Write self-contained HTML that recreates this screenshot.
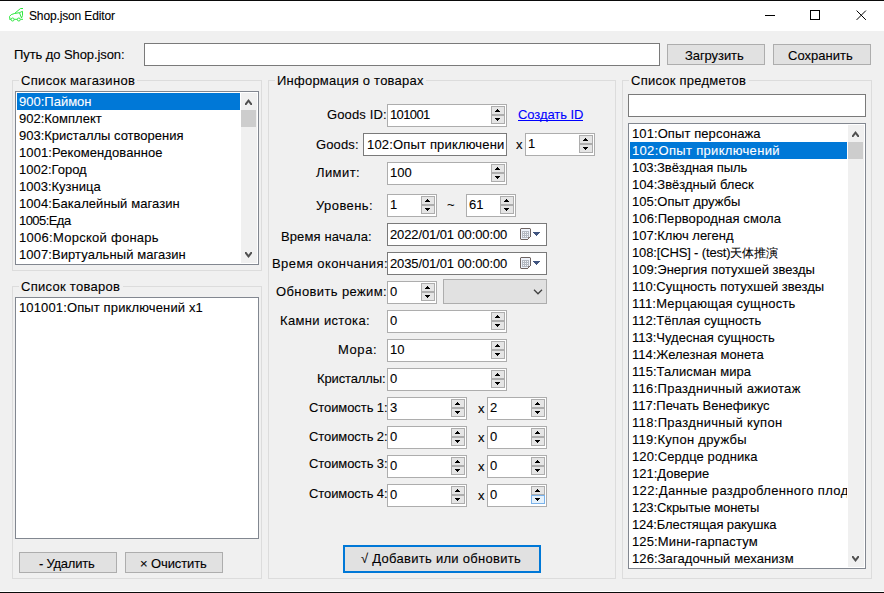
<!DOCTYPE html>
<html><head><meta charset="utf-8">
<style>
*{box-sizing:border-box;margin:0;padding:0}
html,body{width:884px;height:593px;overflow:hidden;background:#f0f0f0}
body{position:relative;font-family:"Liberation Sans",sans-serif;font-size:13px;color:#000;-webkit-text-stroke:0.1px currentColor}
.a{position:absolute}
.t{position:absolute;white-space:nowrap;line-height:15px;height:15px}
.grp{position:absolute;border:1px solid #dcdcdc}
.gbg{position:absolute;background:#f0f0f0;height:3px}
.tb{position:absolute;background:#fff;border:1px solid #7a7a7a;overflow:hidden}
.num{position:absolute;background:#fff;border:1px solid #adadad;overflow:hidden}
.spin{position:absolute;top:1px;right:1px;width:14px;height:18px}
.sb{position:absolute;left:0;width:14px;height:9px;background:#e5e5e5;border:1px solid #adadad}
.sb svg{position:absolute;left:3px;top:2px}
.btn{position:absolute;background:#e1e1e1;border:1px solid #adadad}
.lb{position:absolute;background:#fff;border:1px solid #828790;overflow:hidden}
.it{position:absolute;left:1px;height:17px;line-height:17px;white-space:nowrap;padding-left:2px}
.sel{background:#0078d7;color:#fff}
.scr{position:absolute;background:#f0f0f0;width:16px}
.thumb{position:absolute;left:0;width:15px;height:17px;background:#cdcdcd}
.dtp{position:absolute;background:#fff;border:1px solid #7a7a7a}
</style></head><body>
<div class="a" style="left:0;top:0;width:884px;height:1px;background:#0a0a0a"></div>
<div class="a" style="left:0;top:1px;width:884px;height:30px;background:#fff"></div>
<div class="a" style="left:0;top:592px;width:884px;height:1px;background:#0a0a0a"></div>
<div class="a" style="left:0;top:591px;width:884px;height:1px;background:#ffffff"></div>
<svg class="a" style="left:0;top:0" width="30" height="30" viewBox="0 0 30 30">
<g fill="none" stroke="#2ee83e" stroke-width="1" stroke-linejoin="round">
<path d="M14.5 13.5 L20.5 8.5 L23 8.5"/>
<path d="M10 19.5 L9.5 16.5 Q10.5 14.2 14.5 13.5 L19.5 12.7"/>
<path d="M19.5 12.7 L22.5 11.3 L22.5 15.5 L21.5 18 Z"/>
<path d="M9.5 19.3 L11 19.3 M14.2 19.3 L17.2 19.3 M20.5 19.3 L23 19.3"/>
<circle cx="12.6" cy="19.5" r="1.5"/><circle cx="18.8" cy="19.5" r="1.5"/>
</g></svg>
<div class="t" style="left:29.00px;top:9px;font-size:12px;letter-spacing:-0.137px;">Shop.json Editor</div>
<div class="a" style="left:765px;top:15px;width:10px;height:1px;background:#000"></div>
<div class="a" style="left:810px;top:10px;width:10px;height:10px;border:1px solid #000"></div>
<svg class="a" style="left:856px;top:10px" width="11" height="11" viewBox="0 0 11 11"><path d="M0.6 0.6 L9.9 9.9 M9.9 0.6 L0.6 9.9" stroke="#000" stroke-width="1"/></svg>
<div class="t" style="left:14.00px;top:47px;letter-spacing:-0.084px;">Путь до Shop.json:</div>
<div class="tb" style="left:144px;top:43px;width:516px;height:23px"></div>
<div class="btn" style="left:667px;top:44px;width:98px;height:21px;"></div>
<div class="t" style="left:685.00px;top:48px;letter-spacing:-0.073px;">Загрузить</div>
<div class="btn" style="left:773px;top:44px;width:98px;height:21px;"></div>
<div class="t" style="left:788.00px;top:48px;letter-spacing:0.022px;">Сохранить</div>
<div class="grp" style="left:12px;top:80px;width:250px;height:191px"></div>
<div class="gbg" style="left:19px;top:79px;width:118px"></div>
<div class="t" style="left:21.00px;top:73px;letter-spacing:0.320px;">Список магазинов</div>
<div class="lb" style="left:15px;top:91px;width:244px;height:174px"><div class="it sel" style="top:1px;width:223px">900:Паймон</div><div class="it" style="top:18px;width:223px">902:Комплект</div><div class="it" style="top:35px;width:223px">903:Кристаллы сотворения</div><div class="it" style="top:52px;width:223px;letter-spacing:0.089px">1001:Рекомендованное</div><div class="it" style="top:69px;width:223px">1002:Город</div><div class="it" style="top:86px;width:223px">1003:Кузница</div><div class="it" style="top:103px;width:223px;letter-spacing:0.073px">1004:Бакалейный магазин</div><div class="it" style="top:120px;width:223px;letter-spacing:-0.557px">1005:Еда</div><div class="it" style="top:137px;width:223px;letter-spacing:0.272px">1006:Морской фонарь</div><div class="it" style="top:154px;width:223px;letter-spacing:0.078px">1007:Виртуальный магазин</div><div class="scr" style="left:225px;top:1px;height:170px"><div class="thumb" style="top:17px"></div><svg class="a" style="left:4px;top:6px" width="7" height="6" viewBox="0 0 7 6"><polygon points="0,6 1.4,6 3.5,3.2 5.6,6 7,6 7,4.4 3.5,0 0,4.4" fill="#505050"/></svg><svg class="a" style="left:4px;top:159px" width="7" height="6" viewBox="0 0 7 6"><polygon points="0,0 1.4,0 3.5,2.8 5.6,0 7,0 7,1.6 3.5,6 0,1.6" fill="#505050"/></svg></div></div>
<div class="grp" style="left:12px;top:286px;width:250px;height:293px"></div>
<div class="gbg" style="left:19px;top:285px;width:104px"></div>
<div class="t" style="left:21.00px;top:279px;letter-spacing:0.281px;">Список товаров</div>
<div class="lb" style="left:15px;top:297px;width:244px;height:242px"><div class="it" style="top:1px;letter-spacing:0.13px">101001:Опыт приключений x1</div></div>
<div class="btn" style="left:19px;top:552px;width:98px;height:21px;"></div>
<div class="t" style="left:39.00px;top:556px;letter-spacing:-0.225px;">- Удалить</div>
<div class="btn" style="left:125px;top:552px;width:98px;height:21px;"></div>
<div class="t" style="left:140.00px;top:556px;letter-spacing:-0.113px;">× Очистить</div>
<div class="grp" style="left:268px;top:80px;width:348px;height:499px"></div>
<div class="gbg" style="left:275px;top:79px;width:151px"></div>
<div class="t" style="left:277.00px;top:73px;letter-spacing:0.235px;">Информация о товарах</div>
<div class="t" style="left:327.00px;top:107px;letter-spacing:0.136px;">Goods ID:</div>
<div class="num" style="left:387px;top:104px;width:120px;height:23px"><div class="spin"><div class="sb" style="top:0"><svg width="5" height="3" shape-rendering="crispEdges"><rect x="2" y="0" width="1" height="1"/><rect x="1" y="1" width="3" height="1"/><rect x="0" y="2" width="5" height="1"/></svg></div><div class="sb" style="top:9px"><svg width="5" height="3" shape-rendering="crispEdges"><rect x="0" y="0" width="5" height="1"/><rect x="1" y="1" width="3" height="1"/><rect x="2" y="2" width="1" height="1"/></svg></div></div></div>
<div class="t" style="left:390.00px;top:107px;letter-spacing:-0.630px;">101001</div>
<div class="t" style="left:518.00px;top:107px;letter-spacing:-0.070px;color:#0000ff;">Создать ID</div>
<div class="a" style="left:518px;top:120px;width:65px;height:1px;background:#0000ff"></div>
<div class="t" style="left:316.00px;top:137px;letter-spacing:0.140px;">Goods:</div>
<div class="tb" style="left:363px;top:133px;width:144px;height:23px"></div>
<div class="t" style="left:367.00px;top:137px;letter-spacing:0.169px;">102:Опыт приключени</div>
<div class="t" style="left:516.00px;top:137px;">x</div>
<div class="num" style="left:525px;top:133px;width:70px;height:23px"><div class="spin"><div class="sb" style="top:0"><svg width="5" height="3" shape-rendering="crispEdges"><rect x="2" y="0" width="1" height="1"/><rect x="1" y="1" width="3" height="1"/><rect x="0" y="2" width="5" height="1"/></svg></div><div class="sb" style="top:9px"><svg width="5" height="3" shape-rendering="crispEdges"><rect x="0" y="0" width="5" height="1"/><rect x="1" y="1" width="3" height="1"/><rect x="2" y="2" width="1" height="1"/></svg></div></div></div>
<div class="t" style="left:528.00px;top:136px;">1</div>
<div class="t" style="left:316.00px;top:165px;letter-spacing:0.411px;">Лимит:</div>
<div class="num" style="left:387px;top:162px;width:120px;height:23px"><div class="spin"><div class="sb" style="top:0"><svg width="5" height="3" shape-rendering="crispEdges"><rect x="2" y="0" width="1" height="1"/><rect x="1" y="1" width="3" height="1"/><rect x="0" y="2" width="5" height="1"/></svg></div><div class="sb" style="top:9px"><svg width="5" height="3" shape-rendering="crispEdges"><rect x="0" y="0" width="5" height="1"/><rect x="1" y="1" width="3" height="1"/><rect x="2" y="2" width="1" height="1"/></svg></div></div></div>
<div class="t" style="left:390.00px;top:165px;">100</div>
<div class="t" style="left:316.00px;top:198px;letter-spacing:0.418px;">Уровень:</div>
<div class="num" style="left:387px;top:194px;width:50px;height:23px"><div class="spin"><div class="sb" style="top:0"><svg width="5" height="3" shape-rendering="crispEdges"><rect x="2" y="0" width="1" height="1"/><rect x="1" y="1" width="3" height="1"/><rect x="0" y="2" width="5" height="1"/></svg></div><div class="sb" style="top:9px"><svg width="5" height="3" shape-rendering="crispEdges"><rect x="0" y="0" width="5" height="1"/><rect x="1" y="1" width="3" height="1"/><rect x="2" y="2" width="1" height="1"/></svg></div></div></div>
<div class="t" style="left:390.00px;top:197px;">1</div>
<div class="t" style="left:447.00px;top:197px;">~</div>
<div class="num" style="left:466px;top:194px;width:50px;height:23px"><div class="spin"><div class="sb" style="top:0"><svg width="5" height="3" shape-rendering="crispEdges"><rect x="2" y="0" width="1" height="1"/><rect x="1" y="1" width="3" height="1"/><rect x="0" y="2" width="5" height="1"/></svg></div><div class="sb" style="top:9px"><svg width="5" height="3" shape-rendering="crispEdges"><rect x="0" y="0" width="5" height="1"/><rect x="1" y="1" width="3" height="1"/><rect x="2" y="2" width="1" height="1"/></svg></div></div></div>
<div class="t" style="left:469.00px;top:197px;">61</div>
<div class="t" style="left:281.00px;top:229px;letter-spacing:0.112px;">Время начала:</div>
<div class="dtp" style="left:387px;top:223px;width:160px;height:23px"></div>
<div class="t" style="left:390.00px;top:227px;letter-spacing:-0.114px;">2022/01/01 00:00:00</div>
<div class="t" style="left:272.00px;top:256px;letter-spacing:0.422px;">Время окончания:</div>
<div class="dtp" style="left:387px;top:252px;width:160px;height:23px"></div>
<div class="t" style="left:390.00px;top:256px;letter-spacing:-0.114px;">2035/01/01 00:00:00</div>
<svg class="a" style="left:520px;top:228px" width="20" height="12" shape-rendering="crispEdges">
<rect x="0" y="0" width="1" height="1" fill="#c8c2c0"/><rect x="10" y="0" width="1" height="1" fill="#c8c2c0"/><rect x="0" y="11" width="1" height="1" fill="#c8c2c0"/>
<path d="M1 0 H10 V1 H11 V9 H10 V10 H9 V11 H8 V12 H1 V11 H0 V1 H1 Z" fill="#6e6462"/>
<path d="M1 1 H10 V9 H9 V10 H8 V11 H1 Z" fill="#eef2fa"/>
<rect x="2" y="3" width="7" height="7" fill="#b4b9c2"/>
<rect x="3" y="4" width="1" height="1" fill="#f4f6fa"/><rect x="5" y="4" width="1" height="1" fill="#f4f6fa"/><rect x="7" y="4" width="1" height="1" fill="#f4f6fa"/>
<rect x="3" y="6" width="1" height="1" fill="#f4f6fa"/><rect x="5" y="6" width="1" height="1" fill="#f4f6fa"/><rect x="7" y="6" width="1" height="1" fill="#f4f6fa"/>
<rect x="3" y="8" width="1" height="1" fill="#f4f6fa"/><rect x="5" y="8" width="1" height="1" fill="#f4f6fa"/><rect x="7" y="8" width="1" height="1" fill="#f4f6fa"/>
<rect x="8" y="9" width="1" height="1" fill="#8a8080"/>
<rect x="13" y="4" width="7" height="1" fill="#40547f"/><rect x="14" y="5" width="5" height="1" fill="#40547f"/><rect x="15" y="6" width="3" height="1" fill="#40547f"/><rect x="16" y="7" width="1" height="1" fill="#40547f"/>
</svg>
<svg class="a" style="left:520px;top:257px" width="20" height="12" shape-rendering="crispEdges">
<rect x="0" y="0" width="1" height="1" fill="#c8c2c0"/><rect x="10" y="0" width="1" height="1" fill="#c8c2c0"/><rect x="0" y="11" width="1" height="1" fill="#c8c2c0"/>
<path d="M1 0 H10 V1 H11 V9 H10 V10 H9 V11 H8 V12 H1 V11 H0 V1 H1 Z" fill="#6e6462"/>
<path d="M1 1 H10 V9 H9 V10 H8 V11 H1 Z" fill="#eef2fa"/>
<rect x="2" y="3" width="7" height="7" fill="#b4b9c2"/>
<rect x="3" y="4" width="1" height="1" fill="#f4f6fa"/><rect x="5" y="4" width="1" height="1" fill="#f4f6fa"/><rect x="7" y="4" width="1" height="1" fill="#f4f6fa"/>
<rect x="3" y="6" width="1" height="1" fill="#f4f6fa"/><rect x="5" y="6" width="1" height="1" fill="#f4f6fa"/><rect x="7" y="6" width="1" height="1" fill="#f4f6fa"/>
<rect x="3" y="8" width="1" height="1" fill="#f4f6fa"/><rect x="5" y="8" width="1" height="1" fill="#f4f6fa"/><rect x="7" y="8" width="1" height="1" fill="#f4f6fa"/>
<rect x="8" y="9" width="1" height="1" fill="#8a8080"/>
<rect x="13" y="4" width="7" height="1" fill="#40547f"/><rect x="14" y="5" width="5" height="1" fill="#40547f"/><rect x="15" y="6" width="3" height="1" fill="#40547f"/><rect x="16" y="7" width="1" height="1" fill="#40547f"/>
</svg>
<div class="t" style="left:276.00px;top:284px;letter-spacing:0.380px;">Обновить режим:</div>
<div class="num" style="left:387px;top:281px;width:50px;height:23px"><div class="spin"><div class="sb" style="top:0"><svg width="5" height="3" shape-rendering="crispEdges"><rect x="2" y="0" width="1" height="1"/><rect x="1" y="1" width="3" height="1"/><rect x="0" y="2" width="5" height="1"/></svg></div><div class="sb" style="top:9px"><svg width="5" height="3" shape-rendering="crispEdges"><rect x="0" y="0" width="5" height="1"/><rect x="1" y="1" width="3" height="1"/><rect x="2" y="2" width="1" height="1"/></svg></div></div></div>
<div class="t" style="left:390.00px;top:284px;">0</div>
<div class="a" style="left:443px;top:279px;width:104px;height:25px;background:#e1e1e1;border:1px solid #adadad"></div>
<svg class="a" style="left:533px;top:288px" width="10" height="7" viewBox="0 0 10 7"><path d="M1 1.8 L5 5.8 L9 1.8" fill="none" stroke="#404040" stroke-width="1.25"/></svg>
<div class="t" style="left:280.00px;top:313px;letter-spacing:0.350px;">Камни истока:</div>
<div class="num" style="left:387px;top:310px;width:120px;height:23px"><div class="spin"><div class="sb" style="top:0"><svg width="5" height="3" shape-rendering="crispEdges"><rect x="2" y="0" width="1" height="1"/><rect x="1" y="1" width="3" height="1"/><rect x="0" y="2" width="5" height="1"/></svg></div><div class="sb" style="top:9px"><svg width="5" height="3" shape-rendering="crispEdges"><rect x="0" y="0" width="5" height="1"/><rect x="1" y="1" width="3" height="1"/><rect x="2" y="2" width="1" height="1"/></svg></div></div></div>
<div class="t" style="left:390.00px;top:313px;">0</div>
<div class="t" style="left:338.00px;top:342px;letter-spacing:0.584px;">Мора:</div>
<div class="num" style="left:387px;top:339px;width:120px;height:23px"><div class="spin"><div class="sb" style="top:0"><svg width="5" height="3" shape-rendering="crispEdges"><rect x="2" y="0" width="1" height="1"/><rect x="1" y="1" width="3" height="1"/><rect x="0" y="2" width="5" height="1"/></svg></div><div class="sb" style="top:9px"><svg width="5" height="3" shape-rendering="crispEdges"><rect x="0" y="0" width="5" height="1"/><rect x="1" y="1" width="3" height="1"/><rect x="2" y="2" width="1" height="1"/></svg></div></div></div>
<div class="t" style="left:390.00px;top:342px;">10</div>
<div class="t" style="left:317.00px;top:371px;letter-spacing:-0.124px;">Кристаллы:</div>
<div class="num" style="left:387px;top:368px;width:120px;height:23px"><div class="spin"><div class="sb" style="top:0"><svg width="5" height="3" shape-rendering="crispEdges"><rect x="2" y="0" width="1" height="1"/><rect x="1" y="1" width="3" height="1"/><rect x="0" y="2" width="5" height="1"/></svg></div><div class="sb" style="top:9px"><svg width="5" height="3" shape-rendering="crispEdges"><rect x="0" y="0" width="5" height="1"/><rect x="1" y="1" width="3" height="1"/><rect x="2" y="2" width="1" height="1"/></svg></div></div></div>
<div class="t" style="left:390.00px;top:371px;">0</div>
<div class="t" style="left:309.00px;top:400px;letter-spacing:-0.084px;">Стоимость 1:</div>
<div class="num" style="left:387px;top:397px;width:80px;height:23px"><div class="spin"><div class="sb" style="top:0"><svg width="5" height="3" shape-rendering="crispEdges"><rect x="2" y="0" width="1" height="1"/><rect x="1" y="1" width="3" height="1"/><rect x="0" y="2" width="5" height="1"/></svg></div><div class="sb" style="top:9px"><svg width="5" height="3" shape-rendering="crispEdges"><rect x="0" y="0" width="5" height="1"/><rect x="1" y="1" width="3" height="1"/><rect x="2" y="2" width="1" height="1"/></svg></div></div></div>
<div class="t" style="left:390.00px;top:400px;">3</div>
<div class="t" style="left:478.00px;top:401px;">x</div>
<div class="num" style="left:487px;top:397px;width:60px;height:23px"><div class="spin"><div class="sb" style="top:0"><svg width="5" height="3" shape-rendering="crispEdges"><rect x="2" y="0" width="1" height="1"/><rect x="1" y="1" width="3" height="1"/><rect x="0" y="2" width="5" height="1"/></svg></div><div class="sb" style="top:9px"><svg width="5" height="3" shape-rendering="crispEdges"><rect x="0" y="0" width="5" height="1"/><rect x="1" y="1" width="3" height="1"/><rect x="2" y="2" width="1" height="1"/></svg></div></div></div>
<div class="t" style="left:490.00px;top:400px;">2</div>
<div class="t" style="left:309.00px;top:429px;letter-spacing:-0.084px;">Стоимость 2:</div>
<div class="num" style="left:387px;top:426px;width:80px;height:23px"><div class="spin"><div class="sb" style="top:0"><svg width="5" height="3" shape-rendering="crispEdges"><rect x="2" y="0" width="1" height="1"/><rect x="1" y="1" width="3" height="1"/><rect x="0" y="2" width="5" height="1"/></svg></div><div class="sb" style="top:9px"><svg width="5" height="3" shape-rendering="crispEdges"><rect x="0" y="0" width="5" height="1"/><rect x="1" y="1" width="3" height="1"/><rect x="2" y="2" width="1" height="1"/></svg></div></div></div>
<div class="t" style="left:390.00px;top:429px;">0</div>
<div class="t" style="left:478.00px;top:430px;">x</div>
<div class="num" style="left:487px;top:426px;width:60px;height:23px"><div class="spin"><div class="sb" style="top:0"><svg width="5" height="3" shape-rendering="crispEdges"><rect x="2" y="0" width="1" height="1"/><rect x="1" y="1" width="3" height="1"/><rect x="0" y="2" width="5" height="1"/></svg></div><div class="sb" style="top:9px"><svg width="5" height="3" shape-rendering="crispEdges"><rect x="0" y="0" width="5" height="1"/><rect x="1" y="1" width="3" height="1"/><rect x="2" y="2" width="1" height="1"/></svg></div></div></div>
<div class="t" style="left:490.00px;top:429px;">0</div>
<div class="t" style="left:309.00px;top:456px;letter-spacing:-0.084px;">Стоимость 3:</div>
<div class="num" style="left:387px;top:455px;width:80px;height:23px"><div class="spin"><div class="sb" style="top:0"><svg width="5" height="3" shape-rendering="crispEdges"><rect x="2" y="0" width="1" height="1"/><rect x="1" y="1" width="3" height="1"/><rect x="0" y="2" width="5" height="1"/></svg></div><div class="sb" style="top:9px"><svg width="5" height="3" shape-rendering="crispEdges"><rect x="0" y="0" width="5" height="1"/><rect x="1" y="1" width="3" height="1"/><rect x="2" y="2" width="1" height="1"/></svg></div></div></div>
<div class="t" style="left:390.00px;top:458px;">0</div>
<div class="t" style="left:478.00px;top:459px;">x</div>
<div class="num" style="left:487px;top:455px;width:60px;height:23px"><div class="spin"><div class="sb" style="top:0"><svg width="5" height="3" shape-rendering="crispEdges"><rect x="2" y="0" width="1" height="1"/><rect x="1" y="1" width="3" height="1"/><rect x="0" y="2" width="5" height="1"/></svg></div><div class="sb" style="top:9px"><svg width="5" height="3" shape-rendering="crispEdges"><rect x="0" y="0" width="5" height="1"/><rect x="1" y="1" width="3" height="1"/><rect x="2" y="2" width="1" height="1"/></svg></div></div></div>
<div class="t" style="left:490.00px;top:458px;">0</div>
<div class="t" style="left:309.00px;top:486px;letter-spacing:-0.084px;">Стоимость 4:</div>
<div class="num" style="left:387px;top:484px;width:80px;height:23px"><div class="spin"><div class="sb" style="top:0"><svg width="5" height="3" shape-rendering="crispEdges"><rect x="2" y="0" width="1" height="1"/><rect x="1" y="1" width="3" height="1"/><rect x="0" y="2" width="5" height="1"/></svg></div><div class="sb" style="top:9px"><svg width="5" height="3" shape-rendering="crispEdges"><rect x="0" y="0" width="5" height="1"/><rect x="1" y="1" width="3" height="1"/><rect x="2" y="2" width="1" height="1"/></svg></div></div></div>
<div class="t" style="left:390.00px;top:487px;">0</div>
<div class="t" style="left:478.00px;top:488px;">x</div>
<div class="num" style="left:487px;top:484px;width:60px;height:23px"><div class="spin"><div class="sb" style="top:0"><svg width="5" height="3" shape-rendering="crispEdges"><rect x="2" y="0" width="1" height="1"/><rect x="1" y="1" width="3" height="1"/><rect x="0" y="2" width="5" height="1"/></svg></div><div class="sb" style="top:9px;background:#e5f1fb;border-color:#7ab2ea"><svg width="5" height="3" shape-rendering="crispEdges"><rect x="0" y="0" width="5" height="1"/><rect x="1" y="1" width="3" height="1"/><rect x="2" y="2" width="1" height="1"/></svg></div></div></div>
<div class="t" style="left:490.00px;top:487px;">0</div>
<div class="btn" style="left:343px;top:545px;width:198px;height:28px;border:2px solid #0078d7"></div>
<div class="t" style="left:361.00px;top:551px;letter-spacing:0.285px;">√ Добавить или обновить</div>
<div class="grp" style="left:622px;top:80px;width:250px;height:499px"></div>
<div class="gbg" style="left:629px;top:79px;width:120px"></div>
<div class="t" style="left:631.00px;top:73px;letter-spacing:0.237px;">Список предметов</div>
<div class="tb" style="left:628px;top:94px;width:238px;height:23px"></div>
<div class="lb" style="left:628px;top:123px;width:238px;height:446px"><div class="it" style="top:1px;width:217px;overflow:hidden;letter-spacing:0.088px">101:Опыт персонажа</div><div class="it sel" style="top:18px;width:217px;overflow:hidden;letter-spacing:0.316px">102:Опыт приключений</div><div class="it" style="top:35px;width:217px;overflow:hidden;letter-spacing:-0.062px">103:Звёздная пыль</div><div class="it" style="top:52px;width:217px;overflow:hidden">104:Звёздный блеск</div><div class="it" style="top:69px;width:217px;overflow:hidden">105:Опыт дружбы</div><div class="it" style="top:86px;width:217px;overflow:hidden;letter-spacing:0.090px">106:Первородная смола</div><div class="it" style="top:103px;width:217px;overflow:hidden">107:Ключ легенд</div><div class="it" style="top:120px;width:217px;overflow:hidden;letter-spacing:-0.148px">108:[CHS] - (test)<span style="font-size:12px">天体推演</span></div><div class="it" style="top:137px;width:217px;overflow:hidden">109:Энергия потухшей звезды</div><div class="it" style="top:154px;width:217px;overflow:hidden">110:Сущность потухшей звезды</div><div class="it" style="top:171px;width:217px;overflow:hidden;letter-spacing:0.200px">111:Мерцающая сущность</div><div class="it" style="top:188px;width:217px;overflow:hidden">112:Тёплая сущность</div><div class="it" style="top:205px;width:217px;overflow:hidden">113:Чудесная сущность</div><div class="it" style="top:222px;width:217px;overflow:hidden">114:Железная монета</div><div class="it" style="top:239px;width:217px;overflow:hidden;letter-spacing:0.069px">115:Талисман мира</div><div class="it" style="top:256px;width:217px;overflow:hidden;letter-spacing:0.300px">116:Праздничный ажиотаж</div><div class="it" style="top:273px;width:217px;overflow:hidden">117:Печать Венефикус</div><div class="it" style="top:290px;width:217px;overflow:hidden;letter-spacing:0.325px">118:Праздничный купон</div><div class="it" style="top:307px;width:217px;overflow:hidden;letter-spacing:0.280px">119:Купон дружбы</div><div class="it" style="top:324px;width:217px;overflow:hidden;letter-spacing:0.094px">120:Сердце родника</div><div class="it" style="top:341px;width:217px;overflow:hidden">121:Доверие</div><div class="it" style="top:358px;width:217px;overflow:hidden;letter-spacing:0.360px">122:Данные раздробленного плода</div><div class="it" style="top:375px;width:217px;overflow:hidden;letter-spacing:-0.071px">123:Скрытые монеты</div><div class="it" style="top:392px;width:217px;overflow:hidden;letter-spacing:-0.125px">124:Блестящая ракушка</div><div class="it" style="top:409px;width:217px;overflow:hidden;letter-spacing:0.141px">125:Мини-гарпастум</div><div class="it" style="top:426px;width:217px;overflow:hidden;letter-spacing:0.091px">126:Загадочный механизм</div><div class="scr" style="left:219px;top:1px;height:442px"><div class="thumb" style="top:17px"></div><svg class="a" style="left:4px;top:6px" width="7" height="6" viewBox="0 0 7 6"><polygon points="0,6 1.4,6 3.5,3.2 5.6,6 7,6 7,4.4 3.5,0 0,4.4" fill="#505050"/></svg><svg class="a" style="left:4px;top:431px" width="7" height="6" viewBox="0 0 7 6"><polygon points="0,0 1.4,0 3.5,2.8 5.6,0 7,0 7,1.6 3.5,6 0,1.6" fill="#505050"/></svg></div></div>
</body></html>
